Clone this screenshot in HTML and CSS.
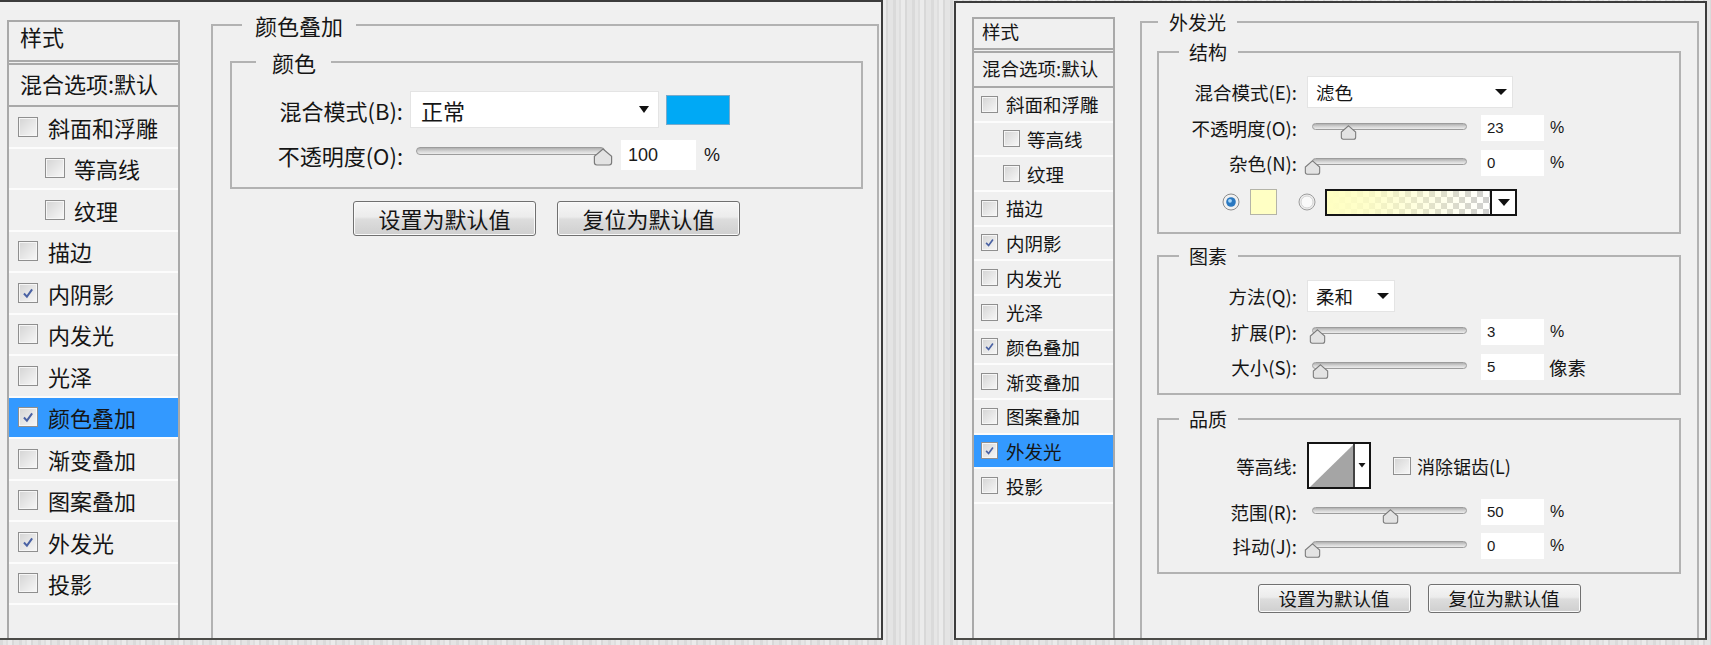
FILE: index.html
```html
<!DOCTYPE html>
<html lang="zh-CN">
<head>
<meta charset="utf-8">
<title>图层样式</title>
<link rel="stylesheet" href="styles.css">
</head>
<body>
<div class="stage">

  <!-- LEFT PANEL : 颜色叠加 -->
  <section class="panel panel-a">
    <div class="styles styles-a">
      <div class="st-head">样式</div>
      <div class="st-blend">混合选项:默认</div>
      <div class="st-row"><span class="cb"></span>斜面和浮雕</div>
      <div class="st-row sub"><span class="cb"></span>等高线</div>
      <div class="st-row sub"><span class="cb"></span>纹理</div>
      <div class="st-row"><span class="cb"></span>描边</div>
      <div class="st-row"><span class="cb on"><svg viewBox="0 0 20 20"><path d="M5.5 10.5 L8.8 14 L14.6 6" fill="none" stroke="#4a62a4" stroke-width="2.2"/></svg></span>内阴影</div>
      <div class="st-row"><span class="cb"></span>内发光</div>
      <div class="st-row"><span class="cb"></span>光泽</div>
      <div class="st-row sel"><span class="cb on"><svg viewBox="0 0 20 20"><path d="M5.5 10.5 L8.8 14 L14.6 6" fill="none" stroke="#4a62a4" stroke-width="2.2"/></svg></span>颜色叠加</div>
      <div class="st-row"><span class="cb"></span>渐变叠加</div>
      <div class="st-row"><span class="cb"></span>图案叠加</div>
      <div class="st-row"><span class="cb on"><svg viewBox="0 0 20 20"><path d="M5.5 10.5 L8.8 14 L14.6 6" fill="none" stroke="#4a62a4" stroke-width="2.2"/></svg></span>外发光</div>
      <div class="st-row"><span class="cb"></span>投影</div>
    </div>

    <fieldset class="fs fs-a-outer">
      <legend>颜色叠加</legend>
      <div class="fs-a-body">
        <fieldset class="fs fs-a-inner">
          <legend>颜色</legend>
          <div class="fa-content">
            <div class="frow fa-r1">
              <span class="lbl">混合模式(B):</span>
              <div class="select sel-a">正常<span class="caret"></span></div>
              <span class="swatch"></span>
            </div>
            <div class="frow fa-r2">
              <span class="lbl">不透明度(O):</span>
              <div class="slider slider-a">
                <div class="track"></div>
                <svg class="thumb thumb-a" style="left:177px" viewBox="0 0 20 18"><path d="M10 1 L18.6 8.4 V14.6 Q18.6 17 16.2 17 H3.8 Q1.4 17 1.4 14.6 V8.4 Z" fill="#e3e3e3" stroke="#7b7b7b" stroke-width="1.2"/></svg>
              </div>
              <span class="num num-a">100</span>
              <span class="unit unit-a">%</span>
            </div>
          </div>
        </fieldset>
        <div class="btns btns-a">
          <button class="btn">设置为默认值</button>
          <button class="btn">复位为默认值</button>
        </div>
      </div>
    </fieldset>
  </section>

  <!-- RIGHT PANEL : 外发光 -->
  <section class="panel panel-b">
    <div class="styles styles-b">
      <div class="st-head">样式</div>
      <div class="st-blend">混合选项:默认</div>
      <div class="st-row"><span class="cb"></span>斜面和浮雕</div>
      <div class="st-row sub"><span class="cb"></span>等高线</div>
      <div class="st-row sub"><span class="cb"></span>纹理</div>
      <div class="st-row"><span class="cb"></span>描边</div>
      <div class="st-row"><span class="cb on"><svg viewBox="0 0 20 20"><path d="M5.5 10.5 L8.8 14 L14.6 6" fill="none" stroke="#4a62a4" stroke-width="2.2"/></svg></span>内阴影</div>
      <div class="st-row"><span class="cb"></span>内发光</div>
      <div class="st-row"><span class="cb"></span>光泽</div>
      <div class="st-row"><span class="cb on"><svg viewBox="0 0 20 20"><path d="M5.5 10.5 L8.8 14 L14.6 6" fill="none" stroke="#4a62a4" stroke-width="2.2"/></svg></span>颜色叠加</div>
      <div class="st-row"><span class="cb"></span>渐变叠加</div>
      <div class="st-row"><span class="cb"></span>图案叠加</div>
      <div class="st-row sel"><span class="cb on"><svg viewBox="0 0 20 20"><path d="M5.5 10.5 L8.8 14 L14.6 6" fill="none" stroke="#4a62a4" stroke-width="2.2"/></svg></span>外发光</div>
      <div class="st-row"><span class="cb"></span>投影</div>
    </div>

    <fieldset class="fs fs-b-outer">
      <legend>外发光</legend>
      <div class="fs-b-body">

        <fieldset class="fs fs-b-inner">
          <legend>结构</legend>
          <div class="fb-content fb-struct">
            <div class="frow fb-row h32">
              <span class="lbl">混合模式(E):</span>
              <div class="select sel-b sel-b-wide">滤色<span class="caret"></span></div>
            </div>
            <div class="frow fb-row h28 mt6">
              <span class="lbl">不透明度(O):</span>
              <div class="slider slider-b">
                <div class="track"></div>
                <svg class="thumb thumb-b" style="left:28px" viewBox="0 0 20 18"><path d="M10 1 L18.6 8.4 V14.6 Q18.6 17 16.2 17 H3.8 Q1.4 17 1.4 14.6 V8.4 Z" fill="#e3e3e3" stroke="#7b7b7b" stroke-width="1.3"/></svg>
              </div>
              <span class="num num-b">23</span>
              <span class="unit unit-b">%</span>
            </div>
            <div class="frow fb-row h28 mt7">
              <span class="lbl">杂色(N):</span>
              <div class="slider slider-b">
                <div class="track"></div>
                <svg class="thumb thumb-b" style="left:-8px" viewBox="0 0 20 18"><path d="M10 1 L18.6 8.4 V14.6 Q18.6 17 16.2 17 H3.8 Q1.4 17 1.4 14.6 V8.4 Z" fill="#e3e3e3" stroke="#7b7b7b" stroke-width="1.3"/></svg>
              </div>
              <span class="num num-b">0</span>
              <span class="unit unit-b">%</span>
            </div>
            <div class="frow fb-row h28 mt11 colorpick">
              <svg class="radio" viewBox="0 0 18 18"><circle cx="9" cy="9" r="8" fill="#f1f1f1" stroke="#8c8c8c"/><circle cx="9" cy="9" r="4.8" fill="#2a78c0"/><circle cx="8" cy="7.8" r="1.9" fill="#a8d6f8"/></svg>
              <span class="cswatch"></span>
              <svg class="radio radio-off" viewBox="0 0 18 18"><circle cx="9" cy="9" r="8" fill="#eeeeee" stroke="#9d9d9d"/><circle cx="9" cy="9" r="6" fill="#fafafa" stroke="#d4d4d4"/></svg>
              <span class="gradpick"><span class="grad-fill"></span><span class="grad-arrow"><span class="caret"></span></span></span>
            </div>
          </div>
        </fieldset>

        <fieldset class="fs fs-b-inner fs-gap10">
          <legend>图素</legend>
          <div class="fb-content fb-elem">
            <div class="frow fb-row h32">
              <span class="lbl">方法(Q):</span>
              <div class="select sel-b sel-b-short">柔和<span class="caret"></span></div>
            </div>
            <div class="frow fb-row h28 mt6">
              <span class="lbl">扩展(P):</span>
              <div class="slider slider-b">
                <div class="track"></div>
                <svg class="thumb thumb-b" style="left:-3px" viewBox="0 0 20 18"><path d="M10 1 L18.6 8.4 V14.6 Q18.6 17 16.2 17 H3.8 Q1.4 17 1.4 14.6 V8.4 Z" fill="#e3e3e3" stroke="#7b7b7b" stroke-width="1.3"/></svg>
              </div>
              <span class="num num-b">3</span>
              <span class="unit unit-b">%</span>
            </div>
            <div class="frow fb-row h28 mt7">
              <span class="lbl">大小(S):</span>
              <div class="slider slider-b">
                <div class="track"></div>
                <svg class="thumb thumb-b" style="left:0px" viewBox="0 0 20 18"><path d="M10 1 L18.6 8.4 V14.6 Q18.6 17 16.2 17 H3.8 Q1.4 17 1.4 14.6 V8.4 Z" fill="#e3e3e3" stroke="#7b7b7b" stroke-width="1.3"/></svg>
              </div>
              <span class="num num-b">5</span>
              <span class="unit unit-b unit-cjk">像素</span>
            </div>
          </div>
        </fieldset>

        <fieldset class="fs fs-b-inner fs-gap12">
          <legend>品质</legend>
          <div class="fb-content fb-qual">
            <div class="frow fb-row h47">
              <span class="lbl">等高线:</span>
              <svg class="contour" viewBox="0 0 64 47"><rect x="1" y="1" width="62" height="45" fill="#ffffff" stroke="#141414" stroke-width="2"/><polygon points="3,45 46,3 46,45" fill="#a5a5a5"/><line x1="47" y1="1" x2="47" y2="46" stroke="#141414" stroke-width="1.6"/><polygon points="51.5,21 58.5,21 55,25.5" fill="#141414"/></svg>
              <span class="cb cb-aa"></span>
              <span class="aa-text">消除锯齿(L)</span>
            </div>
            <div class="frow fb-row h28 mt9">
              <span class="lbl">范围(R):</span>
              <div class="slider slider-b">
                <div class="track"></div>
                <svg class="thumb thumb-b" style="left:70px" viewBox="0 0 20 18"><path d="M10 1 L18.6 8.4 V14.6 Q18.6 17 16.2 17 H3.8 Q1.4 17 1.4 14.6 V8.4 Z" fill="#e3e3e3" stroke="#7b7b7b" stroke-width="1.3"/></svg>
              </div>
              <span class="num num-b">50</span>
              <span class="unit unit-b">%</span>
            </div>
            <div class="frow fb-row h28 mt6">
              <span class="lbl">抖动(J):</span>
              <div class="slider slider-b">
                <div class="track"></div>
                <svg class="thumb thumb-b" style="left:-8px" viewBox="0 0 20 18"><path d="M10 1 L18.6 8.4 V14.6 Q18.6 17 16.2 17 H3.8 Q1.4 17 1.4 14.6 V8.4 Z" fill="#e3e3e3" stroke="#7b7b7b" stroke-width="1.3"/></svg>
              </div>
              <span class="num num-b">0</span>
              <span class="unit unit-b">%</span>
            </div>
          </div>
        </fieldset>

        <div class="btns btns-b">
          <button class="btn">设置为默认值</button>
          <button class="btn">复位为默认值</button>
        </div>
      </div>
    </fieldset>
  </section>

</div>
</body>
</html>
```

FILE: styles.css
```css
* { box-sizing: border-box; }
html, body { margin: 0; padding: 0; }
body {
  width: 1711px;
  height: 645px;
  overflow: hidden;
  background-color: #e2e2e2;
  background-image: repeating-linear-gradient(90deg,
    #dadada 0 3px, #e6e6e6 3px 6px, #dedede 6px 8px,
    #ebebeb 8px 12px, #d8d8d8 12px 14px, #e4e4e4 14px 19px);
  font-family: "Noto Sans CJK SC", "Microsoft YaHei", sans-serif;
  color: #151515;
}

.stage { display: flex; align-items: flex-start; }

/* ---------- panels ---------- */
.panel {
  background: #f0f0f0;
  display: flex;
  align-items: stretch;
}
.panel-a {
  width: 883px;
  height: 640px;
  border-top: 2px solid #3c3c3c;
  border-right: 2px solid #3c3c3c;
  border-bottom: 2px solid #4b4b48;
  padding-left: 7px;
}
.panel-b {
  width: 753px;
  height: 639px;
  margin-left: 71px;
  margin-top: 1px;
  border: 2px solid #3c3c3c;
  border-bottom-color: #4b4b48;
  padding-left: 16px;
}

/* ---------- style list ---------- */
.styles {
  flex: none;
  border: 2px solid #a9a9a9;
  border-bottom: 0;
  background: #f0f0f0;
}
.st-head { border-bottom: 5px double #a9a9a9; white-space: nowrap; }
.st-blend { border-bottom: 2px solid #a9a9a9; white-space: nowrap; }
.st-row {
  display: flex;
  align-items: center;
  border-bottom: 2px solid #fcfcfc;
  white-space: nowrap;
}
.st-row.sel { background: #3399ff; }

.styles-a { width: 173px; margin-top: 18px; font-size: 22px; }
.styles-a .st-head { height: 43px; line-height: 28px; padding-left: 11px; }
.styles-a .st-blend { height: 42px; line-height: 36px; padding-left: 11px; }
.styles-a .st-row { height: 41.5px; padding-left: 9px; gap: 10px; }
.styles-a .st-row.sub { padding-left: 36px; gap: 9px; }
.styles-a .cb { width: 20px; height: 20px; }

.styles-b { width: 143px; margin-top: 14px; font-size: 18.5px; }
.styles-b .st-head { height: 34px; line-height: 24px; padding-left: 8px; }
.styles-b .st-blend { height: 35px; line-height: 30px; padding-left: 8px; }
.styles-b .st-row { height: 34.67px; padding-left: 7px; gap: 8px; }
.styles-b .st-row.sub { padding-left: 29px; gap: 7px; }
.styles-b .cb { width: 17px; height: 17px; }

/* checkbox */
.cb {
  flex: none;
  display: inline-block;
  border: 1px solid #8f8f8f;
  background: linear-gradient(135deg, #d4d4d4, #f8f8f8);
  box-shadow: inset 0 0 0 1px #f6f6f6;
}
.cb svg { display: block; width: 100%; height: 100%; }
.cb-aa { width: 18px; height: 18px; }

/* ---------- fieldsets ---------- */
.fs {
  margin: 0;
  padding: 0;
  min-width: 0;
  border: 2px solid #b2b2b2;
}
.fs legend { padding: 0; white-space: nowrap; }

/* left */
.fs-a-outer {
  flex: 1;
  margin: 9px 2px 0 31px;
  border-bottom: 0;
}
.fs-a-outer > legend {
  font-size: 22px;
  line-height: 28px;
  margin-left: 29px;
  padding: 0 13px;
}
.fs-a-body { padding: 9px 0 0 17px; }
.fs-a-inner { width: 633px; }
.fs-a-inner > legend {
  font-size: 22px;
  line-height: 28px;
  margin-left: 24px;
  padding: 0 15px 0 16px;
}
.fa-content { padding: 15px 0 17px 41px; }

.frow { display: flex; align-items: center; white-space: nowrap; }
.fa-r1 { height: 37px; }
.fa-r2 { height: 30px; margin-top: 12px; }
.fa-content .lbl { width: 130px; text-align: right; font-size: 22px; line-height: 30px; }

.select {
  display: flex;
  align-items: center;
  justify-content: space-between;
  background: #ffffff;
  border: 1px solid #e4e4e4;
}
.caret {
  display: block;
  width: 0;
  height: 0;
  border-left: 5.5px solid transparent;
  border-right: 5.5px solid transparent;
  border-top: 7px solid #111111;
}
.sel-a {
  width: 249px;
  height: 37px;
  margin-left: 7px;
  padding: 0 9px 0 10px;
  font-size: 22px;
}
.swatch {
  width: 64px;
  height: 30px;
  margin-left: 7px;
  background: #00a9f5;
  border: 1px solid #78aacb;
}

.slider { position: relative; flex: none; }
.track {
  border: 1px solid #9c9c9c;
  border-radius: 4px;
  background: linear-gradient(#b0b0b0, #d6d6d6 55%, #ececec);
}
.thumb { position: absolute; display: block; }

.slider-a { width: 189px; height: 30px; margin-left: 13px; }
.slider-a .track { margin-top: 7px; height: 8px; }
.thumb-a { top: 8px; width: 20px; height: 18px; }

.num {
  background: #ffffff;
  font-family: "Liberation Sans", Arial, sans-serif;
  color: #1a1a1a;
}
.num-a {
  width: 75px;
  height: 30px;
  margin-left: 16px;
  padding-left: 7px;
  font-size: 18px;
  line-height: 30px;
}
.unit { font-family: "Liberation Sans", Arial, sans-serif; }
.unit-a { margin-left: 8px; font-size: 18px; }

.btns { display: flex; justify-content: center; }
.btn {
  padding: 0;
  font-family: inherit;
  color: #151515;
  border: 1px solid #707070;
  border-radius: 3px;
  background: linear-gradient(#f6f6f6, #ececec 45%, #dddddd 52%, #cfcfcf);
  box-shadow: inset 0 0 0 1px #fafafa;
  white-space: nowrap;
}
.btns-a { width: 633px; margin-top: 12px; gap: 21px; }
.btns-a .btn { width: 183px; height: 35px; font-size: 22px; line-height: 33px; }

/* right */
.fs-b-outer {
  flex: 1;
  margin: 7px 6px 0 25px;
  border-bottom: 0;
}
.fs-b-outer > legend {
  font-size: 19px;
  line-height: 24px;
  margin-left: 16px;
  padding: 0 11px;
}
.fs-b-body { padding: 6px 0 0 15px; }
.fs-b-inner { width: 524px; }
.fs-b-inner > legend {
  font-size: 19px;
  line-height: 24px;
  margin-left: 20px;
  padding: 0 11px 0 10px;
}
.fs-gap10 { margin-top: 10px; }
.fs-gap12 { margin-top: 12px; }

.fb-struct { padding: 12px 0 16px 0; }
.fb-elem { padding: 12px 0 12px 0; }
.fb-qual { padding: 11px 0 12px 0; }

.fb-row .lbl { width: 138px; text-align: right; font-size: 18.5px; line-height: 26px; }
.h32 { height: 32px; }
.h28 { height: 28px; }
.h47 { height: 47px; }
.mt6 { margin-top: 6px; }
.mt7 { margin-top: 7px; }
.mt9 { margin-top: 9px; }
.mt11 { margin-top: 11px; }

.sel-b {
  height: 32px;
  margin-left: 10px;
  padding: 0 5px 0 8px;
  font-size: 18.5px;
}
.sel-b-wide { width: 206px; }
.sel-b-short { width: 88px; }

.slider-b { width: 155px; height: 28px; margin-left: 15px; }
.slider-b .track { margin-top: 9px; height: 7px; }
.thumb-b { top: 11px; width: 17px; height: 15px; }

.num-b {
  width: 63px;
  height: 26px;
  margin-left: 14px;
  padding-left: 6px;
  font-size: 15px;
  line-height: 26px;
}
.unit-b { margin-left: 6px; font-size: 16px; }
.unit-b.unit-cjk { font-family: "Noto Sans CJK SC", "Microsoft YaHei", sans-serif; font-size: 18.5px; margin-left: 5px; }

.colorpick { padding-left: 63px; }
.radio { width: 18px; height: 18px; flex: none; display: block; }
.cswatch {
  width: 27px;
  height: 26px;
  margin-left: 10px;
  background: #ffffc4;
  border: 1px solid #b4b4a8;
}
.radio-off { margin-left: 21px; }
.gradpick {
  display: flex;
  width: 192px;
  height: 27px;
  margin-left: 9px;
  border: 2px solid #151515;
}
.grad-fill {
  flex: 1;
  background:
    linear-gradient(90deg, #ffffc2 0%, rgba(255, 255, 194, 0.85) 25%, rgba(255, 255, 194, 0) 100%),
    repeating-conic-gradient(#cfcfcf 0 25%, #ffffff 0 50%) 0 0 / 12px 12px;
}
.grad-arrow {
  width: 25px;
  display: flex;
  align-items: center;
  justify-content: center;
  background: #ffffff;
  border-left: 2px solid #151515;
}
.grad-arrow .caret { border-left-width: 6px; border-right-width: 6px; border-top-width: 7px; }
.sel-b .caret { border-left-width: 6px; border-right-width: 6px; border-top-width: 6px; }

.contour { width: 64px; height: 47px; margin-left: 10px; display: block; flex: none; }
.cb-aa { margin-left: 22px; }
.aa-text { margin-left: 6px; font-size: 18px; }

.btns-b { width: 524px; margin-top: 10px; gap: 17px; }
.btns-b .btn { width: 153px; height: 29px; font-size: 18.5px; line-height: 27px; }
```
